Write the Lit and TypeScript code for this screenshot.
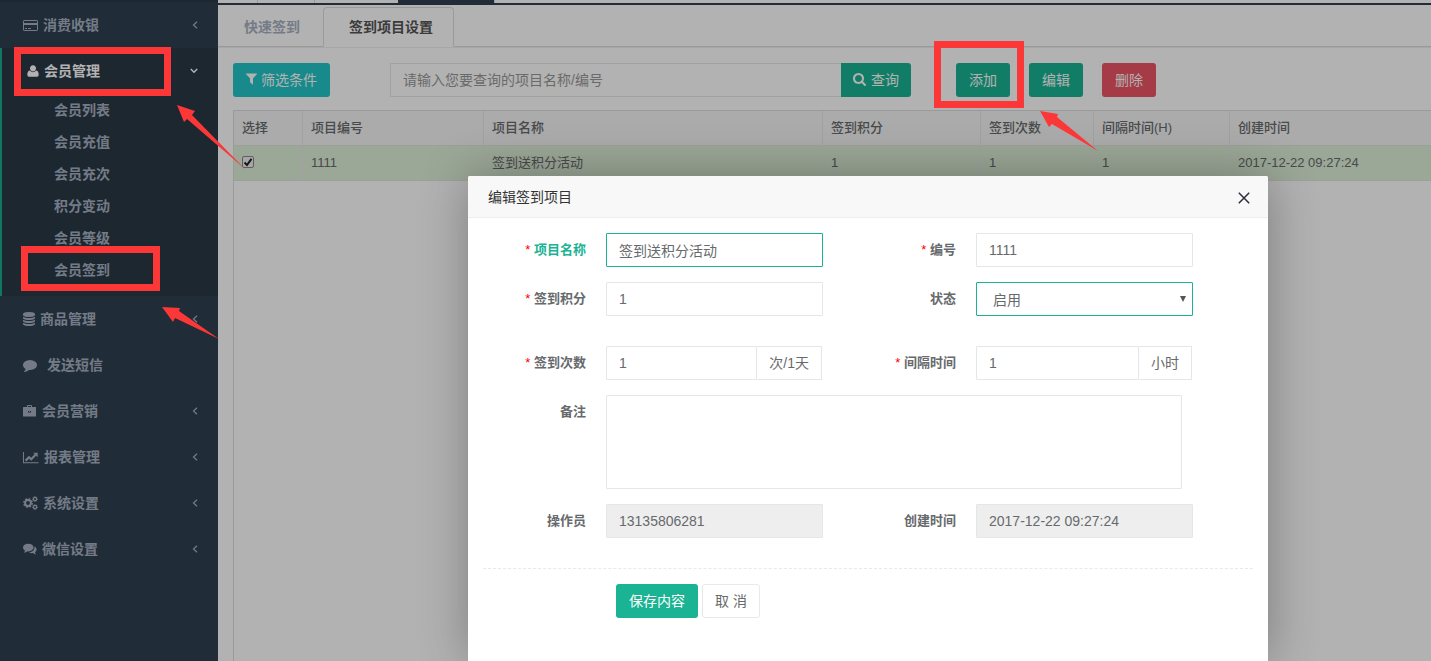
import { LitElement, html, svg, css } from "lit";
import { customElement } from "lit/decorators.js";

/* Icons: each has its own box so that wide and narrow glyphs keep their advance width. */
const icons: Record<string, { w: number; h: number; box: string; body: unknown }> = {
  card: {
    w: 15, h: 13, box: "0 0 15 13",
    body: svg`<rect x=".5" y="1.5" width="14" height="10" rx=".6" fill="none" stroke="currentColor"/><path d="M1 4h13v2H1zM2 9h2v1H2zM5 9h3v1H5z"/>`,
  },
  user: {
    w: 12, h: 12, box: "0 0 12 12",
    body: svg`<path d="M6 .2C7.800.2 9 1.500 9 3.300 9 5.100 7.800 6.600 6 6.600S3 5.100 3 3.300C3 1.500 4.200.2 6 .2z"/><path d="M3 5.600Q4.200 7.200 6 7.200T9 5.600Q11.700 5.900 11.700 9.700 11.700 11.800 10 11.800H2Q.3 11.800.3 9.700.3 5.900 3 5.600z"/>`,
  },
  database: {
    w: 12, h: 14, box: "128 0 1536 1792",
    body: svg`<path d="M896 768q237 0 443-43t325-127v170q0 69-103 128t-280 93.5-385 34.5-385-34.5-280-93.5-103-128v-170q119 84 325 127t443 43zm0 768q237 0 443-43t325-127v170q0 69-103 128t-280 93.5-385 34.5-385-34.5-280-93.5-103-128v-170q119 84 325 127t443 43zm0-384q237 0 443-43t325-127v170q0 69-103 128t-280 93.5-385 34.5-385-34.5-280-93.5-103-128v-170q119 84 325 127t443 43zm0-1152q208 0 385 34.5t280 93.5 103 128v128q0 69-103 128t-280 93.5-385 34.5-385-34.5-280-93.5-103-128v-128q0-69 103-128t280-93.5 385-34.5z"/>`,
  },
  comment: {
    w: 14, h: 14, box: "0 0 1792 1792",
    body: svg`<path d="M1792 896q0 174-120 321.5t-326 233-450 85.5q-70 0-145-8-198 175-460 242-49 14-114 22-17 2-30.5-9t-17.5-29v-1q-3-4-.5-12t2-10 4.5-9.500l6-9 7-8.500 8-9q7-8 31-34.500t34.500-38 31-39.500 32.500-51 27-59 26-76q-157-89-247.500-220t-90.500-281q0-130 71-248.500t191-204.500 286-136.500 348-50.500 348 50.500 286 136.500 191 204.500 71 248.500z"/>`,
  },
  briefcase: {
    w: 14, h: 12, box: "0 0 14 12",
    body: svg`<path fill-rule="evenodd" d="M4 2V1q0-1 1-1h3q1 0 1 1v1h3.500q.5 0 .5.500v8.500q0 .5-.5.500H.5Q0 11.500 0 11V2.500Q0 2 .5 2zM5 2h3V1H5zM5 6v1.500h3V6H7v.7H6V6z"/>`,
  },
  chart: {
    w: 16, h: 13, box: "0 0 16 13",
    body: svg`<path d="M0 1h1v10.200h14.500v1H0z"/><path d="M2.600 9.600 6 6.200l2.200 2.100 4.400-4.600" fill="none" stroke="currentColor" stroke-width="2.200"/><path d="M10.300 1.800h4.400v4.400z"/>`,
  },
  cogs: {
    w: 15, h: 14, box: "0 0 15 14",
    body: svg`<g fill="none" stroke="currentColor"><circle cx="5" cy="7" r="2.900" stroke-width="2"/><circle cx="5" cy="7" r="4.200" stroke-width="1.500" stroke-dasharray="1.700 1.600"/><circle cx="12" cy="3" r="1.600" stroke-width="1.200"/><circle cx="12" cy="3" r="2.400" stroke-width="1" stroke-dasharray="1 .9"/><circle cx="12" cy="11" r="1.600" stroke-width="1.200"/><circle cx="12" cy="11" r="2.400" stroke-width="1" stroke-dasharray="1 .9"/></g>`,
  },
  comments: {
    w: 14, h: 12, box: "0 0 14 12",
    body: svg`<path d="M2 7Q1.900 8.700 1 9.700 2.800 9.500 4.500 8.200z"/><ellipse cx="5.300" cy="4.600" rx="5.300" ry="3.900"/><path d="M11.600 3.600Q13.600 4.700 13.600 6.600 13.600 8.300 12 9.300 12.200 10.500 13.200 11.400 11.300 11.200 9.900 10.100 7.900 10.400 6.100 9.500 11.500 9 11.600 3.600z"/>`,
  },
  filter: {
    w: 11, h: 12, box: "192 256 1408 1408",
    body: svg`<path d="M1595 295q17 41-14 70l-493 493v742q0 42-39 59-13 5-25 5-27 0-45-19l-256-256q-19-19-19-45v-486l-493-493q-31-29-14-70 17-39 59-39h1280q42 0 59 39z"/>`,
  },
  search: {
    w: 13, h: 13, box: "64 128 1664 1664",
    body: svg`<path d="M1216 832q0-185-131.5-316.5t-316.5-131.5-316.5 131.5-131.5 316.5 131.5 316.5 316.5 131.5 316.5-131.5 131.5-316.5zm512 832q0 52-38 90t-90 38q-54 0-90-38l-343-342q-179 124-399 124-143 0-273.5-55.5t-225-150-150-225-55.5-273.5 55.5-273.5 150-225 225-150 273.5-55.5 273.5 55.5 225 150 150 225 55.5 273.5q0 220-124 399l343 343q37 37 37 90z"/>`,
  },
  left: {
    w: 6, h: 8, box: "0 0 6 8",
    body: svg`<path d="M5 .8 1.500 4 5 7.200" fill="none" stroke="currentColor" stroke-width="1.200"/>`,
  },
  down: {
    w: 8, h: 6, box: "0 0 8 6",
    body: svg`<path d="M.8 1 4 4.200 7.200 1" fill="none" stroke="currentColor" stroke-width="1.500"/>`,
  },
  close: {
    w: 12, h: 12, box: "0 0 12 12",
    body: svg`<path d="M.8.8l10.400 10.400M11.200.8.8 11.200" fill="none" stroke="currentColor" stroke-width="1.500"/>`,
  },
};

const icon = (name: string) => {
  const i = icons[name];
  return html`<svg class="icon" width=${i.w} height=${i.h} viewBox=${i.box} aria-hidden="true">${i.body}</svg>`;
};

interface NavItem {
  icon: string;
  label: string;
  leaf?: boolean;
  children?: string[];
}

const NAV: NavItem[] = [
  { icon: "card", label: "消费收银" },
  {
    icon: "user",
    label: "会员管理",
    children: ["会员列表", "会员充值", "会员充次", "积分变动", "会员等级", "会员签到"],
  },
  { icon: "database", label: "商品管理" },
  { icon: "comment", label: "发送短信", leaf: true },
  { icon: "briefcase", label: "会员营销" },
  { icon: "chart", label: "报表管理" },
  { icon: "cogs", label: "系统设置" },
  { icon: "comments", label: "微信设置" },
];

const reset = css`
  * {
    box-sizing: border-box;
  }
  a {
    color: inherit;
    text-decoration: none;
  }
  button,
  input,
  select,
  textarea {
    font-family: inherit;
    font-size: 14px;
    color: inherit;
    margin: 0;
    outline: none;
  }
  .icon {
    flex: none;
    fill: currentColor;
  }
  .btn {
    display: inline-flex;
    align-items: center;
    justify-content: center;
    gap: 4px;
    height: 34px;
    padding: 0 12px 2px;
    border: 1px solid transparent;
    border-radius: 3px;
    background: #1ab394;
    color: #fff;
    white-space: pre;
  }
`;

@customElement("side-menu")
class SideMenu extends LitElement {
  static styles = [
    reset,
    css`
      :host {
        display: block;
        flex: none;
        width: 218px;
        padding-top: 2px;
        background: #2f4050;
        color: #a7b1c2;
        font-weight: 600;
        box-shadow: inset 0 2px #293846;
      }
      .row {
        display: flex;
        align-items: center;
        gap: 5px;
        height: 46px;
        padding: 0 20px 0 23px;
      }
      .label {
        flex: 1;
      }
      .leaf {
        gap: 10px;
      }
      .open {
        border-left: 2px solid #19aa8d;
        background: #293846;
        padding-bottom: 10px;
      }
      .open .row {
        padding-left: 25px;
        color: #fff;
      }
      .child {
        display: flex;
        align-items: center;
        height: 32px;
        padding-left: 52px;
      }
    `,
  ];

  render() {
    return html`<nav>
      ${NAV.map(
        (n) => html`<div class=${n.children ? "open" : ""}>
          <a class="row ${n.leaf ? "leaf" : ""}" href="#">
            ${icon(n.icon)}<span class="label">${n.label}</span>
            ${n.leaf ? "" : icon(n.children ? "down" : "left")}
          </a>
          ${(n.children ?? []).map((c) => html`<a class="child" href="#">${c}</a>`)}
        </div>`
      )}
    </nav>`;
  }
}

@customElement("project-list")
class ProjectList extends LitElement {
  static styles = [
    reset,
    css`
      :host {
        display: flex;
        flex-direction: column;
        flex: 1;
        min-width: 0;
        background: #fff;
      }
      .strip {
        display: flex;
        height: 5px;
        border-bottom: 2px solid #2f4050;
      }
      .strip i {
        border-right: 1px solid #ddd;
      }
      .s1 {
        width: 40px;
      }
      .s2 {
        width: 57px;
      }
      .s3 {
        width: 83px;
      }
      .strip .s3 {
        border: 0;
      }
      .s4 {
        width: 97px;
        background: #2f4050;
      }
      .tabs {
        display: flex;
        align-items: flex-end;
        gap: 2px;
        height: 42px;
        border-bottom: 1px solid #ddd;
        box-shadow: 0 1px #f0f0f0;
        font-weight: 600;
        color: #a7b1c2;
      }
      .tab {
        height: 40px;
        margin-bottom: -1px;
        padding: 0 20px 0 25px;
        border: 1px solid transparent;
        border-radius: 4px 4px 0 0;
        line-height: 38px;
      }
      .current {
        border-color: #ddd #ddd #fff;
        background: #fff;
        color: #555;
      }
      .tools {
        display: flex;
        padding: 16px 15px 13px;
      }
      .filter {
        background: #23c6c8;
      }
      .find {
        display: flex;
        width: 521px;
        margin: 0 45px 0 60px;
      }
      .find input {
        flex: 1;
        min-width: 0;
        height: 34px;
        padding: 0 12px;
        border: 1px solid #e5e6e7;
        border-right: 0;
        background: #fff;
      }
      .find input::placeholder {
        color: #999;
        opacity: 1;
      }
      .find .btn {
        border-radius: 0 3px 3px 0;
        gap: 5px;
        width: 70px;
      }
      .actions {
        display: flex;
        gap: 19px;
      }
      .danger {
        background: #ed5565;
      }
      .grid {
        flex: 1;
        margin-left: 15px;
        border: 1px solid #ddd;
        border-width: 1px 0 0 1px;
      }
      table {
        width: 100%;
        table-layout: fixed;
        border-collapse: separate;
        border-spacing: 0;
        font-size: 13px;
        line-height: 20px;
      }
      .c1 {
        width: 69px;
      }
      .c2 {
        width: 181px;
      }
      .c3 {
        width: 339px;
      }
      .c4 {
        width: 158px;
      }
      .c5 {
        width: 113px;
      }
      .c6 {
        width: 136px;
      }
      th,
      td {
        height: 35px;
        padding: 0 8px;
        border-right: 1px solid #e7e7e7;
        border-bottom: 1px solid #e0e4e0;
        text-align: left;
        white-space: nowrap;
      }
      th:last-child,
      td:last-child {
        border-right: 0;
      }
      th {
        background: #f5f5f6;
        font-weight: 500;
      }
      td {
        background: #dff0d8;
      }
      .tick {
        appearance: none;
        display: block;
        width: 12px;
        height: 12px;
        margin-bottom: 3px;
        border: 1px solid #888;
        border-radius: 2px;
        background: #eee
          url("data:image/svg+xml,%3Csvg xmlns='http://www.w3.org/2000/svg' viewBox='0 0 10 10'%3E%3Cpath d='M1.500 5.500 4 8 8.500 1.800' fill='none' stroke='%23222' stroke-width='2'/%3E%3C/svg%3E");
      }
    `,
  ];

  render() {
    return html`
      <div class="strip"><i class="s1"></i><i class="s2"></i><i class="s3"></i><i class="s4"></i></div>
      <nav class="tabs">
        <a class="tab" href="#">快速签到</a>
        <a class="tab current" href="#">签到项目设置</a>
      </nav>
      <div class="tools">
        <button class="btn filter">${icon("filter")}筛选条件</button>
        <div class="find">
          <input type="text" aria-label="查询" placeholder="请输入您要查询的项目名称/编号" />
          <button class="btn">${icon("search")}查询</button>
        </div>
        <div class="actions">
          <button class="btn">添加</button>
          <button class="btn">编辑</button>
          <button class="btn danger">删除</button>
        </div>
      </div>
      <div class="grid">
        <table>
          <colgroup>
            <col class="c1" /><col class="c2" /><col class="c3" /><col class="c4" /><col class="c5" /><col
              class="c6"
            /><col />
          </colgroup>
          <thead>
            <tr>
              ${["选择", "项目编号", "项目名称", "签到积分", "签到次数", "间隔时间(H)", "创建时间"].map(
                (h) => html`<th>${h}</th>`
              )}
            </tr>
          </thead>
          <tbody>
            <tr>
              <td><input class="tick" type="checkbox" aria-label="选择" checked /></td>
              ${["1111", "签到送积分活动", "1", "1", "1", "2017-12-22 09:27:24"].map(
                (c) => html`<td>${c}</td>`
              )}
            </tr>
          </tbody>
        </table>
      </div>
    `;
  }
}

@customElement("edit-dialog")
class EditDialog extends LitElement {
  static styles = [
    reset,
    css`
      :host {
        display: block;
        background: #fff;
        border-radius: 2px 2px 0 0;
        box-shadow: 1px 1px 50px rgba(0, 0, 0, 0.3);
      }
      header {
        display: flex;
        align-items: center;
        justify-content: space-between;
        height: 42px;
        padding: 0 18px 0 20px;
        border-bottom: 1px solid #eee;
        border-radius: 2px 2px 0 0;
        background: #f8f8f8;
        color: #333;
      }
      h2 {
        margin: 0;
        font-size: 14px;
        font-weight: 400;
      }
      .close {
        display: flex;
        padding: 2px 0 0;
        border: 0;
        background: none;
        color: #2e2d3c;
      }
      form {
        padding: 15px;
      }
      .fields {
        display: grid;
        grid-template-columns: 103px 217px 113px 217px;
        gap: 15px 20px;
        padding-bottom: 30px;
        border-bottom: 1px dashed #e7eaec;
      }
      label {
        font-size: 13px;
        font-weight: 600;
        line-height: 33px;
        text-align: right;
      }
      .must::before {
        content: "* ";
        color: #f00;
        font-weight: 400;
      }
      .valid {
        color: #1ab394;
      }
      .field {
        width: 100%;
        height: 34px;
        padding: 0 12px;
        border: 1px solid #e5e6e7;
        border-radius: 1px;
        background: #fff;
      }
      .field.on {
        border-color: #1ab394;
      }
      .field:disabled {
        background: #eee;
        opacity: 1;
      }
      .pick {
        position: relative;
      }
      select.field {
        appearance: none;
        padding: 2px 16px 0;
      }
      .caret {
        position: absolute;
        top: 14px;
        right: 7px;
        border: 3px solid transparent;
        border-top: 6px solid #555;
        border-bottom: 0;
        pointer-events: none;
      }
      .group {
        display: flex;
        padding-right: 1px;
      }
      .group .field {
        flex: 1;
        min-width: 0;
      }
      .unit {
        padding: 0 12px;
        border: 1px solid #e5e6e7;
        border-left: 0;
        line-height: 32px;
      }
      .spaced {
        margin-top: 15px;
      }
      textarea.field {
        display: block;
        height: 94px;
        resize: none;
      }
      .memo {
        grid-column: 2 / 5;
        padding-right: 11px;
      }
      .buttons {
        display: flex;
        gap: 4px;
        padding: 15px 0 0 133px;
      }
      .plain {
        border-color: #e7eaec;
        background: #fff;
        color: #676a6c;
      }
    `,
  ];

  render() {
    return html`
      <header>
        <h2>编辑签到项目</h2>
        <button class="close" aria-label="关闭">${icon("close")}</button>
      </header>
      <form @submit=${(e: Event) => e.preventDefault()}>
        <div class="fields">
          <label class="must" for="name"><span class="valid">项目名称</span></label>
          <input id="name" class="field on" value="签到送积分活动" />
          <label class="must" for="code">编号</label>
          <input id="code" class="field" value="1111" />

          <label class="must" for="points">签到积分</label>
          <input id="points" class="field" value="1" />
          <label for="status">状态</label>
          <div class="pick">
            <select id="status" class="field on">
              <option>启用</option>
            </select>
            <span class="caret"></span>
          </div>

          <label class="must spaced" for="times">签到次数</label>
          <div class="group spaced">
            <input id="times" class="field" value="1" /><span class="unit">次/1天</span>
          </div>
          <label class="must spaced" for="gap">间隔时间</label>
          <div class="group spaced">
            <input id="gap" class="field" value="1" /><span class="unit">小时</span>
          </div>

          <label for="memo">备注</label>
          <div class="memo"><textarea id="memo" class="field"></textarea></div>

          <label for="operator">操作员</label>
          <input id="operator" class="field" value="13135806281" disabled />
          <label for="created">创建时间</label>
          <input id="created" class="field" value="2017-12-22 09:27:24" disabled />
        </div>
        <div class="buttons">
          <button class="btn">保存内容</button>
          <button class="btn plain" type="button">取 消</button>
        </div>
      </form>
    `;
  }
}

@customElement("app-root")
class AppRoot extends LitElement {
  static styles = css`
    :host {
      display: flex;
      position: relative;
      min-height: 100vh;
      overflow: hidden;
      font: 14px/20px "Liberation Sans", "Noto Sans CJK SC", sans-serif;
      color: #676a6c;
    }
    .shade {
      position: absolute;
      inset: 0;
      background: rgba(0, 0, 0, 0.3);
    }
    .dialog {
      position: absolute;
      top: 176px;
      bottom: 0;
      left: 468px;
      width: 800px;
    }
    .marks {
      position: absolute;
      top: 0;
      left: 0;
      pointer-events: none;
    }
  `;

  render() {
    return html`
      <side-menu></side-menu>
      <project-list></project-list>
      <div class="shade"></div>
      <edit-dialog class="dialog"></edit-dialog>
      <svg class="marks" width="1100" height="345" viewBox="0 0 1100 345" fill="#fc3737" aria-hidden="true">
        <g fill="none" stroke="#fc3737" stroke-width="7">
          <rect x="17.5" y="50.5" width="150" height="42" />
          <rect x="24.5" y="249.5" width="132" height="38" />
          <rect x="937.5" y="44.5" width="83" height="60" />
        </g>
        <path d="M177 105 195 111 192 115 245 169 187 119 184 122z" />
        <path d="M162 307 180 308 179 311 219 339 175 318 173 322z" />
        <path d="M1040 111 1058 114 1057 117 1098 151 1052 124 1049 127z" />
      </svg>
    `;
  }
}
